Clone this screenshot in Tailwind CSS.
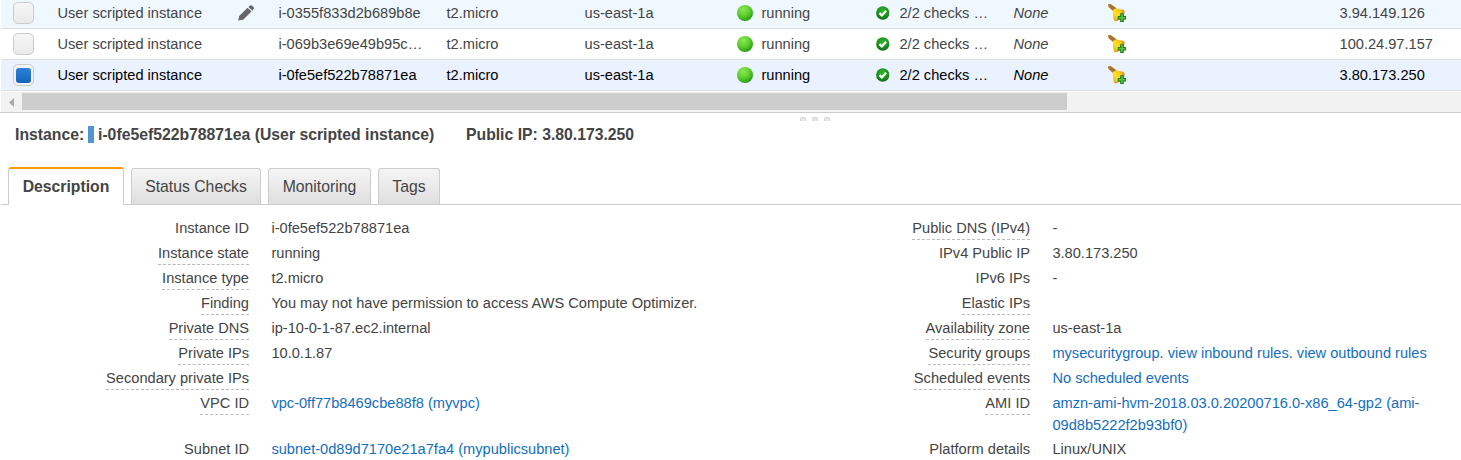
<!DOCTYPE html>
<html lang="en">
<head>
<meta charset="utf-8">
<title>Instances</title>
<script src="https://cdn.jsdelivr.net/npm/@tailwindcss/browser@4"></script>
</head>
<body class="h-[460px] overflow-hidden bg-white font-['Liberation_Sans',Arial,sans-serif] text-[14.62px] text-[#444]">
<svg class="absolute h-0 w-0">
  <defs>
    <radialGradient id="gDot" cx=".38" cy=".28" r=".75"><stop offset="0" stop-color="#8be855"/><stop offset=".55" stop-color="#5dcc2c"/><stop offset="1" stop-color="#249a10"/></radialGradient>
    <radialGradient id="gCheck" cx=".5" cy=".35" r=".65"><stop offset="0" stop-color="#35b52a"/><stop offset=".6" stop-color="#1c9420"/><stop offset="1" stop-color="#0f6d12"/></radialGradient>
    <linearGradient id="gBell" x1="0" y1="1" x2="1" y2="0"><stop offset="0" stop-color="#d9990c"/><stop offset=".4" stop-color="#ffe02a"/><stop offset=".7" stop-color="#f9c914"/><stop offset="1" stop-color="#c48a14"/></linearGradient>
  </defs>
  <symbol id="dot" viewBox="0 0 16 16"><circle cx="8" cy="8" r="8" fill="url(#gDot)"/></symbol>
  <symbol id="check" viewBox="0 0 14 14"><circle cx="7" cy="7" r="6.9" fill="url(#gCheck)"/><path d="M3.6 7.1 6.1 9.5 10.5 4.7" fill="none" stroke="#fff" stroke-width="2.3"/></symbol>
  <symbol id="bell" viewBox="0 0 18 18">
    <path d="M0 .2 2.6 0 8.6 4.2 6 8 .5 3Z" fill="#a8752d"/>
    <path d="M4.6 6.6Q6.4 4.3 8.3 4.2Q11.5 5.2 15.6 5.8Q17.4 8.8 14.6 12.6Q11 17.4 6.4 17.4Q5.3 15 5.2 12.4Q5 9.4 4.6 6.6Z" fill="url(#gBell)"/>
    <path d="M15.4 6Q17.8 8 15.4 11.8Q12.2 17 6.8 17.3Q12.6 12.6 15.4 6Z" fill="#c99a55"/>
    <path d="M12.2 9.3h3.6v2.6H18v3.7h-2.2V18h-3.6v-2.4H9.7v-3.7h2.5Z" fill="#16801a"/>
    <path d="M13.2 10.3h1.6v2.6H17v1.7h-2.2V17h-1.6v-2.4h-2.5v-1.7h2.5Z" fill="#58c43f"/>
  </symbol>
</svg>

<section class="pl-px leading-[22px]">
  <div class="grid h-[29px] grid-cols-[56.5px_180px_41px_168px_138px_152.5px_139px_112px_94px_232px_1fr] items-center border-b border-[#ddd] bg-[#f0f8ff] pb-[2px] whitespace-nowrap">
    <span class="mb-[2px] ml-3 h-[22px] w-[21px] self-end rounded-[5px] border border-[#ccc] bg-linear-to-b from-[#f6f6f6] to-[#eaeaea]"></span>
    <span>User scripted instance</span>
    <svg class="-mt-px h-4 w-4" viewBox="0 0 16 16" fill="#666"><path d="M.2 15.6 1.2 10.9 9.6 2.8 13.5 6.6 5.1 14.7Z"/><path d="M10.4 2 12.1.5Q13-.2 13.9.5L15.6 2.3Q16.3 3.1 15.6 4L14.3 5.7Z"/></svg>
    <span>i-0355f833d2b689b8e</span>
    <span>t2.micro</span><span>us-east-1a</span>
    <span class="flex items-center gap-[8.5px]"><svg class="h-4 w-4"><use href="#dot"/></svg>running</span>
    <span class="flex items-center gap-[10px]"><svg class="h-[14px] w-[14px]"><use href="#check"/></svg>2/2 checks …</span>
    <span class="ml-[25.5px] italic">None</span>
    <svg class="ml-[26px] h-[18px] w-[18px]"><use href="#bell"/></svg>
    <span class="ml-[25.5px]">3.94.149.126</span>
  </div>
  <div class="grid h-[31px] grid-cols-[56.5px_180px_41px_168px_138px_152.5px_139px_112px_94px_232px_1fr] items-center border-b border-[#ddd] whitespace-nowrap">
    <span class="ml-3 h-[22px] w-[21px] rounded-[5px] border border-[#ccc] bg-linear-to-b from-[#f6f6f6] to-[#eaeaea]"></span>
    <span>User scripted instance</span><span></span>
    <span>i-069b3e69e49b95c…</span>
    <span>t2.micro</span><span>us-east-1a</span>
    <span class="flex items-center gap-[8.5px]"><svg class="h-4 w-4"><use href="#dot"/></svg>running</span>
    <span class="flex items-center gap-[10px]"><svg class="h-[14px] w-[14px]"><use href="#check"/></svg>2/2 checks …</span>
    <span class="ml-[25.5px] italic">None</span>
    <svg class="ml-[26px] h-[18px] w-[18px]"><use href="#bell"/></svg>
    <span class="ml-[25.5px]">100.24.97.157</span>
  </div>
  <div class="grid h-[31px] grid-cols-[56.5px_180px_41px_168px_138px_152.5px_139px_112px_94px_232px_1fr] items-center border-b border-[#ddd] bg-[#eaf2ff] whitespace-nowrap text-black">
    <span class="ml-3 flex h-[22px] w-[21px] items-center justify-center rounded-[5px] border border-[#ccc] bg-[#f3f3f3]"><span class="h-[15px] w-[15px] rounded-[3px] bg-linear-to-b from-[#2d82da] to-[#1463bb]"></span></span>
    <span>User scripted instance</span><span></span>
    <span>i-0fe5ef522b78871ea</span>
    <span>t2.micro</span><span>us-east-1a</span>
    <span class="flex items-center gap-[8.5px]"><svg class="h-4 w-4"><use href="#dot"/></svg>running</span>
    <span class="flex items-center gap-[10px]"><svg class="h-[14px] w-[14px]"><use href="#check"/></svg>2/2 checks …</span>
    <span class="ml-[25.5px] italic">None</span>
    <svg class="ml-[26px] h-[18px] w-[18px]"><use href="#bell"/></svg>
    <span class="ml-[25.5px]">3.80.173.250</span>
  </div>
  <div class="mt-px flex h-[20px] items-center bg-[#f2f2f2]">
    <svg class="mr-2 ml-2 h-[9px] w-[5px]" viewBox="0 0 5 9" fill="#aaa"><path d="M5 0v9L0 4.5Z"/></svg>
    <div class="-mt-px h-[17px] w-[1045px] bg-[#cdcdcd]"></div>
  </div>
</section>

<div class="flex h-[9px] items-end justify-center gap-[6px] border-t border-[#ccc]">
  <span class="ml-[168px] h-1 w-[6px] rounded-t-[2px] border border-b-0 border-[#d4d4d4] bg-[#e6e6e6]"></span>
  <span class="h-1 w-[6px] rounded-t-[2px] border border-b-0 border-[#d4d4d4] bg-[#e6e6e6]"></span>
  <span class="h-1 w-[6px] rounded-t-[2px] border border-b-0 border-[#d4d4d4] bg-[#e6e6e6]"></span>
</div>

<header class="flex h-[27px] items-center pl-[15px] text-[15.75px] font-bold whitespace-nowrap">
  <span class="w-[73px]">Instance:</span>
  <span class="h-[17px] w-[6px] bg-[#5294cf]"></span>
  <span class="ml-1 w-[368px]">i-0fe5ef522b78871ea (User scripted instance)</span>
  <span>Public IP: 3.80.173.250</span>
</header>

<nav class="mt-[19px] ml-px flex h-[38px] items-end gap-[7px] border-b border-[#ccc] pl-[7px] text-[15.75px] whitespace-nowrap">
  <div class="-mb-px flex h-[38px] w-[116px] items-center justify-center rounded-t-[3px] border-x border-t-2 border-x-[#ccc] border-t-[#f90] bg-white font-bold">Description</div>
  <div class="flex h-9 w-[130px] items-center justify-center rounded-t-[3px] border border-b-0 border-[#ccc] bg-linear-to-b from-[#f5f5f5] to-[#dfdfdf]">Status Checks</div>
  <div class="flex h-9 w-[103px] items-center justify-center rounded-t-[3px] border border-b-0 border-[#ccc] bg-linear-to-b from-[#f5f5f5] to-[#dfdfdf]">Monitoring</div>
  <div class="flex h-9 w-[62px] items-center justify-center rounded-t-[3px] border border-b-0 border-[#ccc] bg-linear-to-b from-[#f5f5f5] to-[#dfdfdf]">Tags</div>
</nav>

<main class="flex pt-3 leading-[22px]">
  <dl class="grid w-[781px] grid-cols-[249px_1fr] content-start gap-x-[22.4px] whitespace-nowrap">
    <dt class="h-[25px] justify-self-end">Instance ID</dt><dd>i-0fe5ef522b78871ea</dd>
    <dt class="mb-[2px] h-[23px] justify-self-end border-b border-dashed border-[#bbb]">Instance state</dt><dd>running</dd>
    <dt class="mb-[2px] h-[23px] justify-self-end border-b border-dashed border-[#bbb]">Instance type</dt><dd>t2.micro</dd>
    <dt class="mb-[2px] h-[23px] justify-self-end border-b border-dashed border-[#bbb]">Finding</dt><dd>You may not have permission to access AWS Compute Optimizer.</dd>
    <dt class="mb-[2px] h-[23px] justify-self-end border-b border-dashed border-[#bbb]">Private DNS</dt><dd>ip-10-0-1-87.ec2.internal</dd>
    <dt class="mb-[2px] h-[23px] justify-self-end border-b border-dashed border-[#bbb]">Private IPs</dt><dd>10.0.1.87</dd>
    <dt class="mb-[2px] h-[23px] justify-self-end border-b border-dashed border-[#bbb]">Secondary private IPs</dt><dd></dd>
    <dt class="mb-[23px] h-[23px] justify-self-end border-b border-dashed border-[#bbb]">VPC ID</dt><dd class="text-[#146ebe]">vpc-0ff77b8469cbe88f8 (myvpc)</dd>
    <dt class="justify-self-end">Subnet ID</dt><dd class="text-[#146ebe]">subnet-0d89d7170e21a7fa4 (mypublicsubnet)</dd>
  </dl>
  <dl class="grid w-[680px] grid-cols-[249px_1fr] content-start gap-x-[22.4px] whitespace-nowrap">
    <dt class="mb-[2px] h-[23px] justify-self-end border-b border-dashed border-[#bbb]">Public DNS (IPv4)</dt><dd>-</dd>
    <dt class="h-[25px] justify-self-end">IPv4 Public IP</dt><dd>3.80.173.250</dd>
    <dt class="h-[25px] justify-self-end">IPv6 IPs</dt><dd>-</dd>
    <dt class="mb-[2px] h-[23px] justify-self-end border-b border-dashed border-[#bbb]">Elastic IPs</dt><dd></dd>
    <dt class="mb-[2px] h-[23px] justify-self-end border-b border-dashed border-[#bbb]">Availability zone</dt><dd>us-east-1a</dd>
    <dt class="mb-[2px] h-[23px] justify-self-end border-b border-dashed border-[#bbb]">Security groups</dt><dd><a class="text-[#146ebe]">mysecuritygroup</a>. <a class="text-[#146ebe]">view inbound rules</a>. <a class="text-[#146ebe]">view outbound rules</a></dd>
    <dt class="mb-[2px] h-[23px] justify-self-end border-b border-dashed border-[#bbb]">Scheduled events</dt><dd class="text-[#146ebe]">No scheduled events</dd>
    <dt class="mb-[23px] h-[23px] justify-self-end border-b border-dashed border-[#bbb]">AMI ID</dt><dd class="text-[#146ebe]">amzn-ami-hvm-2018.03.0.20200716.0-x86_64-gp2 (ami-<br>09d8b5222f2b93bf0)</dd>
    <dt class="justify-self-end">Platform details</dt><dd>Linux/UNIX</dd>
  </dl>
</main>
</body>
</html>
